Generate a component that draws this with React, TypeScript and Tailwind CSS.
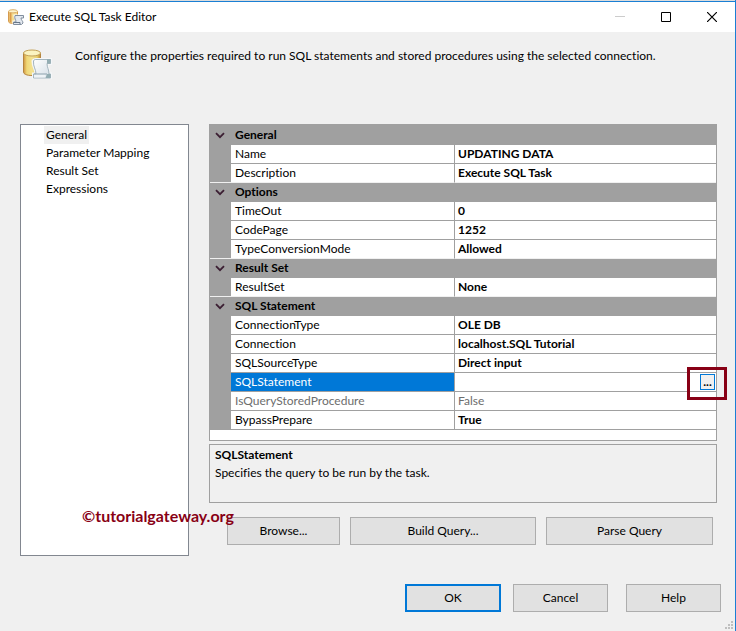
import React, { useState } from 'react';

type Property = {
  name: string;
  value: string;
  disabled?: boolean;
};

type Category = {
  title: string;
  properties: Property[];
};

const pages = ['General', 'Parameter Mapping', 'Result Set', 'Expressions'];

const categories: Category[] = [
  {
    title: 'General',
    properties: [
      { name: 'Name', value: 'UPDATING DATA' },
      { name: 'Description', value: 'Execute SQL Task' },
    ],
  },
  {
    title: 'Options',
    properties: [
      { name: 'TimeOut', value: '0' },
      { name: 'CodePage', value: '1252' },
      { name: 'TypeConversionMode', value: 'Allowed' },
    ],
  },
  {
    title: 'Result Set',
    properties: [{ name: 'ResultSet', value: 'None' }],
  },
  {
    title: 'SQL Statement',
    properties: [
      { name: 'ConnectionType', value: 'OLE DB' },
      { name: 'Connection', value: 'localhost.SQL Tutorial' },
      { name: 'SQLSourceType', value: 'Direct input' },
      { name: 'SQLStatement', value: '' },
      { name: 'IsQueryStoredProcedure', value: 'False', disabled: true },
      { name: 'BypassPrepare', value: 'True' },
    ],
  },
];

function TaskIcon() {
  return (
    <svg width="30" height="30" viewBox="0 0 30 30" className="mt-[17px] shrink-0" aria-hidden="true">
      <defs>
        <linearGradient id="cylinder" x1="0" x2="1">
          <stop offset="0" stopColor="#cf9540" />
          <stop offset="0.2" stopColor="#f0d878" />
          <stop offset="0.5" stopColor="#f3e293" />
          <stop offset="0.8" stopColor="#e8cd6a" />
          <stop offset="1" stopColor="#b98a35" />
        </linearGradient>
        <linearGradient id="paper" x1="0" x2="1" y1="0" y2="1">
          <stop offset="0" stopColor="#ffffff" />
          <stop offset="1" stopColor="#d3dde6" />
        </linearGradient>
      </defs>
      <path d="M1.500 4v19c0 2 3 3.500 8.500 3.500s8.500-1.500 8.500-3.500v-19z" fill="url(#cylinder)" stroke="#b5843f" />
      <ellipse cx="10" cy="4" rx="8.500" ry="3" fill="#fbf3c0" stroke="#c3a158" />
      <path d="M11 12c.5-1.500 1.500-1.500 2.500-1.500h15v4h-3.500c0 4 2 6 2 10.500h1.500v4h-17v-4h2.500c0-5-3-7-3-13z" fill="#ffffff" stroke="#f5f7f9" strokeWidth="3" />
      <path d="M11.500 12c.5-1.500 1.500-1.500 2.500-1.500h14.500v4h-3.500c0 4 2 6 2 10.500h1.500v4h-17v-4h2.500c0-5-3-7-2.500-13z" fill="url(#paper)" stroke="#a3b4bd" />
      <path d="M25 10v4.500h3.500v-4.500zM25 25h3.500v4h-5z" fill="#93adb3" />
      <path d="M12 25.500h11.500v3h-11.500z" fill="#eef3f7" />
      <path d="M12 25h13" stroke="#8ea3ae" />
    </svg>
  );
}

function SmallTaskIcon() {
  return (
    <svg width="16" height="16" viewBox="0 0 16 16" aria-hidden="true">
      <path d="M.5 2.500v10c0 1.200 2 2 4.500 2s4.500-.8 4.500-2v-10z" fill="#f4dc90" stroke="#d59a4e" />
      <path d="M1.500 3.500v9.500l2 .7v-10z" fill="#dd9a48" />
      <ellipse cx="5" cy="2.300" rx="4.500" ry="1.600" fill="#fdf4cf" stroke="#dcae66" />
      <path d="M6.500 6.500h9v2.500h-2c0 2 1.500 3 1.500 6h-9.500v-2.500h2.500c0-2.500-1.500-3-1.500-6z" fill="#e3e8ef" stroke="#ffffff" strokeWidth="2" />
      <path d="M7 6.500h8.500v2.500h-2.500c0 2 2 3 2 5l-1.500 1.500h-8v-2.500h2.500c0-2.500-2-3-1-6.500z" fill="#e3e8ef" stroke="#808d9d" />
      <path d="M6 13.500h6v1.500" fill="none" stroke="#68788a" />
    </svg>
  );
}

function Chevron() {
  return (
    <svg width="10" height="7" viewBox="0 0 10 7" className="mb-px ml-[5px]" aria-hidden="true">
      <path d="M1 1.200L5 5.200L9 1.200" fill="none" stroke="#3c1f33" strokeWidth="1.800" />
    </svg>
  );
}

const buttonClass = 'h-7 border border-[#adadad] bg-[#e1e1e1] hover:border-[#0078d7]';

export default function App() {
  const [page, setPage] = useState('General');
  const [selected, setSelected] = useState('SQLStatement');

  return (
    <div className="relative flex min-h-screen flex-col border-r border-[#1a7fd4] bg-[#f0f0f0] font-['Lato','Open_Sans',sans-serif] text-xs leading-[18px] text-black [font-variant-ligatures:none]">
      <div className="h-px bg-[#dcdcdc]" />
      <header className="flex h-[31px] items-center border-t border-[#1a7fd4] bg-white pl-2">
        <SmallTaskIcon />
        <h1 className="ml-[5px] flex-1">Execute SQL Task Editor</h1>
        <button type="button" aria-label="Minimize" disabled className="flex h-full w-[46px] items-center justify-center">
          <svg width="10" height="10" viewBox="0 0 10 10">
            <path d="M0 4.500h10" stroke="#cccccc" />
          </svg>
        </button>
        <button type="button" aria-label="Maximize" className="flex h-full w-[46px] items-center justify-center">
          <svg width="10" height="10" viewBox="0 0 10 10">
            <path d="M.5.5h9v9h-9z" fill="none" stroke="#000000" />
          </svg>
        </button>
        <button type="button" aria-label="Close" className="flex h-full w-[46px] items-center justify-center">
          <svg width="10" height="10" viewBox="0 0 10 10">
            <path d="M0 0L10 10M10 0L0 10" stroke="#000000" strokeWidth="1.200" />
          </svg>
        </button>
      </header>

      <div className="flex h-[92px] gap-[23px] pl-[22px]">
        <TaskIcon />
        <p className="mt-[15px]">
          Configure the properties required to run SQL statements and stored procedures using the selected connection.
        </p>
      </div>

      <main className="flex gap-5 pr-[18px] pl-5">
        <nav className="relative w-[169px] shrink-0 border border-[#828790] bg-white pt-px pl-[23px]">
          <ul>
            {pages.map((item) => (
              <li key={item} className="h-[18px]">
                <button
                  type="button"
                  onClick={() => setPage(item)}
                  className={item === page ? 'block bg-[#f0f0f0] px-0.5' : 'block px-0.5'}
                >
                  {item}
                </button>
              </li>
            ))}
          </ul>
          <span className="absolute bottom-[29px] left-[61px] z-10 font-['Lato',sans-serif] text-base leading-5 font-bold whitespace-nowrap text-[#880015]">
            ©tutorialgateway.org
          </span>
        </nav>

        <div className="min-w-0 flex-1 pb-[11px]">
          <div className="relative border border-[#a0a0a0] bg-white pb-[10px]">
            <table className="w-full table-fixed border-separate border-spacing-0 border-t border-[#a0a0a0]">
              <colgroup>
                <col className="w-[21px]" />
                <col className="w-[224px]" />
                <col />
              </colgroup>
              {categories.map((category, c) => (
                <tbody key={category.title}>
                  <tr className="bg-[#a0a0a0]">
                    <td className="h-[19px] p-0">
                      <Chevron />
                    </td>
                    <th colSpan={2} scope="colgroup" className="h-[19px] p-0 pb-px pl-1 text-left font-bold">
                      {category.title}
                    </th>
                  </tr>
                  {category.properties.map((property, i) => {
                    const lastRow = i === category.properties.length - 1 && c < categories.length - 1;
                    const line = lastRow ? 'border-b-[#f0f0f0]' : 'border-b-[#a0a0a0]';
                    const isSelected = property.name === selected;
                    const color = isSelected ? 'bg-[#0078d7] text-white' : property.disabled ? 'text-[#6d6d6d]' : '';
                    return (
                      <tr key={property.name} onClick={() => setSelected(property.name)}>
                        <td className={`h-[19px] border-b bg-[#a0a0a0] p-0 ${line}`} />
                        <th
                          scope="row"
                          className={`h-[19px] border-r border-b border-r-[#a0a0a0] p-0 pl-1 text-left font-normal ${line} ${color}`}
                        >
                          {property.name}
                        </th>
                        <td
                          className={`h-[19px] border-b p-0 pl-[3px] ${line} ${property.disabled ? 'text-[#6d6d6d]' : 'font-bold'}`}
                        >
                          {isSelected ? (
                            <button
                              type="button"
                              aria-label="Edit value"
                              className="mr-px ml-auto block h-4 w-[15px] border border-[#0078d7] bg-[#f0f0f0] leading-3"
                            >
                              ...
                            </button>
                          ) : (
                            property.value
                          )}
                        </td>
                      </tr>
                    );
                  })}
                </tbody>
              ))}
            </table>
            {/* callout around the edit button */}
            <div className="pointer-events-none absolute right-[-11px] bottom-10 h-[33px] w-10 border-3 border-[#880015]" />
          </div>

          <section className="mt-[3px] h-[59px] border border-[#a0a0a0] px-[5px] pt-px">
            <h2 className="font-bold">SQLStatement</h2>
            <p>Specifies the query to be run by the task.</p>
          </section>

          <div className="mt-[14px] mr-1 ml-[18px] grid grid-cols-[113fr_186fr_167fr] gap-[10px]">
            <button type="button" className={buttonClass}>Browse...</button>
            <button type="button" className={buttonClass}>Build Query...</button>
            <button type="button" className={buttonClass}>Parse Query</button>
          </div>
        </div>
      </main>

      <footer className="mt-7 flex justify-end pr-[14px]">
        <button type="button" className="h-7 w-24 border-2 border-[#0078d7] bg-[#e1e1e1]">OK</button>
        <button type="button" className={`ml-3 w-[95px] ${buttonClass}`}>Cancel</button>
        <button type="button" className={`ml-[18px] w-[95px] ${buttonClass}`}>Help</button>
      </footer>

      <svg width="8" height="8" viewBox="0 0 8 8" className="absolute right-0.5 bottom-0.5" fill="#bfbfbf" aria-hidden="true">
        <path d="M6 0h2v2h-2zM3 3h2v2h-2zM6 3h2v2h-2zM0 6h2v2h-2zM3 6h2v2h-2zM6 6h2v2h-2z" />
      </svg>
    </div>
  );
}
